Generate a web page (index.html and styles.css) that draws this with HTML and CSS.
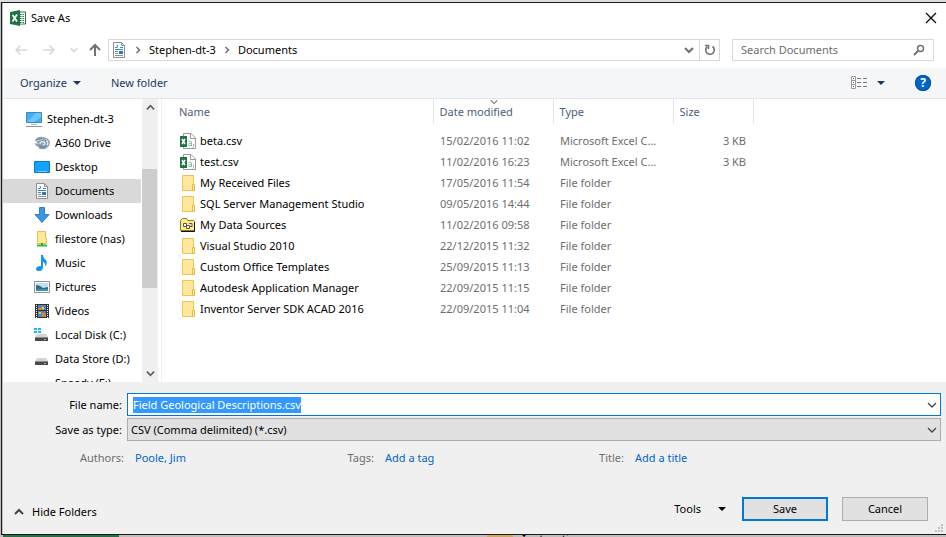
FILE: index.html
```html
<!DOCTYPE html>
<html lang="en">
<head>
    <meta charset="UTF-8">
    <meta name="viewport" content="width=device-width, initial-scale=1.0">
    <title>Save As</title>
    <link rel="stylesheet" href="styles.css">
</head>
<body>
    <svg class="sprite" aria-hidden="true">
        <symbol id="folder" viewBox="0 0 16 16">
            <path d="M2.500 .5h11v9h1v6h-12z" fill="#ffe79c" stroke="#edc64f"/>
            <path d="M12.500 15V9.500h2V15.500h-2z" fill="#fff0b8" stroke="#e6bb3c"/>
        </symbol>
        <symbol id="csv" viewBox="0 0 16 16">
            <path d="M3.500 .5h7.500l4.500 4.500v10.500h-12z" fill="#fff" stroke="#9b9b9b"/>
            <path d="M10.500 .5v5h5" fill="none" stroke="#9b9b9b"/>
            <path d="M8.500 8.500q3-1.500 3 1v3.500m0-2.500q-3-.5-3 1.200t3 .8M13.500 11v2.500q0 .8-1 1.200" fill="none" stroke="#7fbf9a"/>
            <path d="M0 3h7v11H0z" fill="#217346"/>
            <path d="M2 6l3 5M5 6l-3 5" stroke="#fff" stroke-width="1.500"/>
        </symbol>
        <symbol id="doc" viewBox="0 0 16 16">
            <path d="M2.500 .5h8l3 3v12h-11z" fill="#fff" stroke="#8f8f8f"/>
            <path d="M10.500 .5v3h3" fill="none" stroke="#8f8f8f"/>
            <path d="M4 5.500h2M5.500 3.500h1v2M9 5.500h3M4 7.500h8M4 9.500h3" fill="none" stroke="#2a8dd4"/>
            <path d="M8 9h4v3H8z" fill="#2a7ab8"/>
            <path d="M4 11.500h3M4 13.500h8" stroke="#8f8f8f"/>
        </symbol>
        <symbol id="chevron" viewBox="0 0 10 10">
            <path d="M1 3l4 4 4-4" fill="none" stroke="currentColor" stroke-width="1.300"/>
        </symbol>
        <symbol id="chevron-up" viewBox="0 0 10 10">
            <path d="M1 7l4-4 4 4" fill="none" stroke="currentColor" stroke-width="2"/>
        </symbol>
        <symbol id="chevron-bold" viewBox="0 0 10 10">
            <path d="M1 3l4 4 4-4" fill="none" stroke="currentColor" stroke-width="2"/>
        </symbol>
        <symbol id="chevron-right" viewBox="0 0 8 8">
            <path d="M2.500 1l3 3-3 3" fill="none" stroke="currentColor" stroke-width="1.500"/>
        </symbol>
        <symbol id="caret" viewBox="0 0 8 4">
            <path d="M0 0h8L4 4z" fill="currentColor"/>
        </symbol>
        <symbol id="drive" viewBox="0 0 16 16">
            <path d="M3 7h9l2 3H1z" fill="#d4d4d4"/>
            <path d="M1 10h13v4H1z" fill="#4a4a4a"/>
            <path d="M1 10.500h13" stroke="#8a8a8a"/>
            <path d="M10 12h2v1h-2z" fill="#4be04b"/>
        </symbol>
    </svg>

    <div class="backdrop-top"></div>

    <form class="dialog">
        <header class="titlebar">
            <svg class="app-icon" viewBox="0 0 16 16">
                <path d="M9 2h6.500v12H9z" fill="#fff" stroke="#217346"/>
                <path d="M10 4.500h4M10 6.500h4M10 8.500h4M10 10.500h4M10 12.500h4" stroke="#217346"/>
                <path d="M12 3v11" stroke="#fff"/>
                <path d="M0 2l10-2v16L0 14z" fill="#217346"/>
                <path d="M2.500 5l4.500 6.500M7 4.500l-4.500 7" stroke="#fff" stroke-width="1.700"/>
            </svg>
            <h1>Save As</h1>
            <button type="button" class="close" aria-label="Close">
                <svg width="12" height="12" viewBox="0 0 12 12"><path d="M1 1l10 10M11 1L1 11" stroke="#000" stroke-width="1.200"/></svg>
            </button>
        </header>

        <div class="navbar">
            <div class="history">
                <button type="button" aria-label="Back" disabled>
                    <svg width="14" height="14" viewBox="0 0 14 14"><path d="M13 7H2M6.500 2.500L2 7l4.500 4.500" fill="none" stroke="#d9d9d9" stroke-width="1.500"/></svg>
                </button>
                <button type="button" aria-label="Forward" disabled>
                    <svg width="14" height="14" viewBox="0 0 14 14"><path d="M1 7h11M7.500 2.500L12 7l-4.500 4.500" fill="none" stroke="#d9d9d9" stroke-width="1.500"/></svg>
                </button>
                <button type="button" class="recent" aria-label="Recent locations" disabled>
                    <svg width="8" height="8"><use href="#chevron-bold"/></svg>
                </button>
                <button type="button" aria-label="Up">
                    <svg width="14" height="14" viewBox="0 0 14 14"><path d="M7 13V2M2 7l5-5 5 5" fill="none" stroke="#717171" stroke-width="2"/></svg>
                </button>
            </div>
            <div class="address">
                <svg width="16" height="16"><use href="#doc"/></svg>
                <svg class="sep" width="8" height="8"><use href="#chevron-right"/></svg>
                <a href="#">Stephen-dt-3</a>
                <svg class="sep" width="8" height="8"><use href="#chevron-right"/></svg>
                <a href="#">Documents</a>
                <button type="button" class="previous" aria-label="Previous locations"><svg width="10" height="10"><use href="#chevron-bold"/></svg></button>
                <button type="button" class="refresh" aria-label="Refresh">
                    <svg width="12" height="12" viewBox="0 0 12 12"><path d="M8.500 2.500a4.300 4.300 0 1 1-5.500.4M1 1.500h3.500V5" fill="none" stroke="#717171" stroke-width="1.600"/></svg>
                </button>
            </div>
            <div class="search">
                <input type="search" placeholder="Search Documents" aria-label="Search Documents">
                <svg width="12" height="12" viewBox="0 0 12 12"><circle cx="7.500" cy="4.500" r="3" fill="none" stroke="#717171" stroke-width="1.500"/><path d="M5.500 6.500L1 11" stroke="#717171" stroke-width="2"/></svg>
            </div>
        </div>

        <div class="toolbar">
            <button type="button">Organize <svg width="8" height="4"><use href="#caret"/></svg></button>
            <button type="button">New folder</button>
            <button type="button" class="view" aria-label="Change your view">
                <svg width="17" height="14" viewBox="0 0 17 14">
                    <path d="M.5 .5h4v12h-4zM.5 4.500h4M.5 8.500h4" fill="#fff" stroke="#9a9a9a"/>
                    <path d="M2 2h1v1H2z" fill="#555"/><path d="M2 6h1v1H2z" fill="#2f7fff"/><path d="M2 10h1v1H2z" fill="#e02020"/>
                    <path d="M6 2.500h4M12 2.500h4M6 6.500h4M12 6.500h4M6 10.500h4M12 10.500h4" stroke="#7c7c7c"/>
                </svg>
                <svg width="8" height="4"><use href="#caret"/></svg>
            </button>
            <button type="button" class="help" aria-label="Help">?</button>
        </div>

        <main class="browser">
            <nav class="tree">
                <a href="#" class="root">
                    <svg viewBox="0 0 16 16"><path d="M.5 1.500h15v10H.5z" fill="#3bb0ff" stroke="#4c84ab"/><path d="M1 11l9-9h5v4l-7 5z" fill="#6cc7ff"/><path d="M5 13.500h6" stroke="#9cc3dc"/><path d="M0 15.500h16" stroke="#8593a3"/></svg>
                    Stephen-dt-3
                </a>
                <a href="#">
                    <svg viewBox="0 0 16 16"><path d="M1 5q3-4 8-3 6 1 7 5 0 5-5 7-4 1-7-1 2 0 1-1-4-1-4-4l3 1q-2-3-3-4z" fill="#8ba1b1"/><path d="M3 6q5-4 10 0 2 3-1 5M6 9q0-3 4-2 2 2-1 3" fill="none" stroke="#dbe5eb" stroke-width="1.500"/><path d="M3 5q6-3 9 1M5 11q5 3 8-1" fill="none" stroke="#5f7989"/></svg>
                    A360 Drive
                </a>
                <a href="#">
                    <svg viewBox="0 0 16 16"><path d="M.5 2.500h15v11H.5z" fill="#12a2ff" stroke="#1078b8"/><path d="M2 12.500h1M4 12.500h9" stroke="#7fd0ff"/></svg>
                    Desktop
                </a>
                <a href="#" class="selected"><svg><use href="#doc"/></svg>Documents</a>
                <a href="#">
                    <svg viewBox="0 0 16 16"><path d="M5.500 .5h5v7h4.500l-7 8-7-8h4.500z" fill="#3c96e6" stroke="#2b7fce"/></svg>
                    Downloads
                </a>
                <a href="#">
                    <svg viewBox="0 0 16 16"><path d="M3.500 .5h8v7h1v5h-9z" fill="#ffe79c" stroke="#e6c04c"/><path d="M8 12v2" stroke="#2b9c2b" stroke-width="2"/><path d="M3 14.500h10" stroke="#35b535" stroke-width="2"/></svg>
                    filestore (nas)
                </a>
                <a href="#">
                    <svg viewBox="0 0 16 16"><path d="M7 0h2q0 3 3 5 2 3-1 7 1-4-2-5v5q0 4-4 4-3 0-3-2 0-3 5-3z" fill="#1a94ea"/></svg>
                    Music
                </a>
                <a href="#">
                    <svg viewBox="0 0 16 16"><path d="M.5 2.500h15v11H.5z" fill="#fff" stroke="#929292"/><path d="M2 4h12v8H2z" fill="#b9e2f5"/><path d="M2 6q4 0 7 3l5-1v2H2z" fill="#356c70"/><path d="M2 10h12v2H2z" fill="#3e8ebc"/></svg>
                    Pictures
                </a>
                <a href="#">
                    <svg viewBox="0 0 16 16"><path d="M1 1h14v14H1z" fill="#333"/><path d="M4 2h8v5H4zM4 8h8v6H4z" fill="#4b83ce"/><path d="M4 5h3l1-2 2 1v3H4zM7 11l3-2 2 3v2H8z" fill="#c98b35"/><path d="M8 4h2v2H8zM5 9h2v2H5z" fill="#e4cf3c"/><path d="M2.500 2v13M13.500 2v13" stroke="#fff" stroke-dasharray="1 1"/></svg>
                    Videos
                </a>
                <a href="#">
                    <svg viewBox="0 0 16 16"><use href="#drive" width="16" height="16"/><path d="M0 1h3v2H0zM4 1h3v2H4zM0 4h3v2H0zM4 4h3v2H4z" fill="#1bb4ef"/></svg>
                    Local Disk (C:)
                </a>
                <a href="#"><svg><use href="#drive"/></svg>Data Store (D:)</a>
                <a href="#"><svg><use href="#drive"/></svg>Speedy (E:)</a>
            </nav>
            <div class="scrollbar">
                <button type="button" aria-label="Scroll up"><svg width="9" height="9"><use href="#chevron-up"/></svg></button>
                <div class="track"><div class="thumb"></div></div>
                <button type="button" aria-label="Scroll down"><svg width="9" height="9"><use href="#chevron-bold"/></svg></button>
            </div>
            <div class="files">
                <table>
                    <thead>
                        <tr>
                            <th class="name">Name</th>
                            <th class="date">Date modified<svg class="sort" width="8" height="8"><use href="#chevron"/></svg></th>
                            <th class="type">Type</th>
                            <th class="size">Size</th>
                            <th class="rest"></th>
                        </tr>
                    </thead>
                    <tbody>
                        <tr><td><svg><use href="#csv"/></svg>beta.csv</td><td>15/02/2016 11:02</td><td>Microsoft Excel C...</td><td>3 KB</td></tr>
                        <tr><td><svg><use href="#csv"/></svg>test.csv</td><td>11/02/2016 16:23</td><td>Microsoft Excel C...</td><td>3 KB</td></tr>
                        <tr><td><svg><use href="#folder"/></svg>My Received Files</td><td>17/05/2016 11:54</td><td>File folder</td><td></td></tr>
                        <tr><td><svg><use href="#folder"/></svg>SQL Server Management Studio</td><td>09/05/2016 14:44</td><td>File folder</td><td></td></tr>
                        <tr>
                            <td><svg viewBox="0 0 16 16"><path d="M.5 13.500v-10l2-2h4l1.500 2h5.500l1 1v9z" fill="#ffe98a" stroke="#8a7a1c"/><path d="M1 14.500h13.500V5" fill="none" stroke="#111"/><path d="M3.500 6.500h3v3h-3zM6.500 8.500h3v3h-3z" fill="#fff" stroke="#555"/><path d="M9 6.500h3v3h-2" fill="none" stroke="#555"/></svg>My Data Sources</td>
                            <td>11/02/2016 09:58</td><td>File folder</td><td></td>
                        </tr>
                        <tr><td><svg><use href="#folder"/></svg>Visual Studio 2010</td><td>22/12/2015 11:32</td><td>File folder</td><td></td></tr>
                        <tr><td><svg><use href="#folder"/></svg>Custom Office Templates</td><td>25/09/2015 11:13</td><td>File folder</td><td></td></tr>
                        <tr><td><svg><use href="#folder"/></svg>Autodesk Application Manager</td><td>22/09/2015 11:15</td><td>File folder</td><td></td></tr>
                        <tr><td><svg><use href="#folder"/></svg>Inventor Server SDK ACAD 2016</td><td>22/09/2015 11:04</td><td>File folder</td><td></td></tr>
                    </tbody>
                </table>
            </div>
        </main>

        <footer class="options">
            <div class="field">
                <label for="filename">File name:</label>
                <div class="combo active">
                    <input type="text" id="filename" value="Field Geological Descriptions.csv">
                    <button type="button" aria-label="Show file names"><svg width="10" height="10"><use href="#chevron"/></svg></button>
                </div>
            </div>
            <div class="field">
                <label for="filetype">Save as type:</label>
                <div class="combo">
                    <select id="filetype">
                        <option>CSV (Comma delimited) (*.csv)</option>
                    </select>
                    <svg class="arrow" width="10" height="10"><use href="#chevron"/></svg>
                </div>
            </div>
            <div class="meta">
                <span>Authors:</span><a href="#">Poole, Jim</a>
                <span>Tags:</span><a href="#">Add a tag</a>
                <span>Title:</span><a href="#">Add a title</a>
            </div>
            <div class="actions">
                <button type="button" class="hide"><svg width="10" height="10"><use href="#chevron-up"/></svg>Hide Folders</button>
                <button type="button" class="tools">Tools <svg width="8" height="4"><use href="#caret"/></svg></button>
                <button type="submit" class="btn primary">Save</button>
                <button type="button" class="btn">Cancel</button>
            </div>
            <svg class="grip" width="8" height="8" viewBox="0 0 8 8"><path d="M6 0h2v2H6zM3 3h2v2H3zM6 3h2v2H6zM0 6h2v2H0zM3 6h2v2H3zM6 6h2v2H6z" fill="#bfbfbf"/></svg>
        </footer>
    </form>

    <div class="backdrop-bottom">
        <div class="sheet-tab"></div>
        <div class="folder-edge"></div>
        <span>Instructions:</span>
    </div>

    <script>
        const filename = document.getElementById('filename');
        filename.focus();
        filename.select();
    </script>
</body>
</html>
```

FILE: styles.css
```css
* {
    box-sizing: border-box;
}

body {
    margin: 0;
    height: 100vh;
    display: flex;
    flex-direction: column;
    overflow: hidden;
    background-color: #c0bebe;
    font-family: "Noto Sans", "Open Sans", sans-serif;
    font-size: 11px;
    line-height: 16px;
    color: #000;
}

button,
input,
select {
    font: inherit;
    color: inherit;
    margin: 0;
    padding: 0;
    border: none;
    border-radius: 0;
    background: none;
    outline: none;
}

a {
    color: inherit;
    text-decoration: none;
}

svg {
    flex: none;
}

.sprite {
    position: absolute;
    width: 0;
    height: 0;
}

.backdrop-top {
    height: 2px;
    flex: none;
    background-color: #dedede;
}

.backdrop-bottom {
    height: 2px;
    flex: none;
    display: flex;
    overflow: hidden;
    padding-left: 3px;
}

.sheet-tab {
    width: 116px;
    background-color: #217346;
}

.folder-edge {
    width: 26px;
    margin: 0 9px 0 368px;
    background-color: #d0aa5c;
}

.backdrop-bottom span {
    font-size: 12px;
    line-height: 10px;
}

.dialog {
    flex: 1;
    min-height: 0;
    display: flex;
    flex-direction: column;
    margin-left: 1px;
    border: solid #1a1a1a;
    border-width: 1px 0 1px 1px;
    box-shadow: inset 1px 0 #c0bebe;
    padding-left: 1px;
}

/* title bar */
.titlebar {
    display: flex;
    align-items: center;
    gap: 5px;
    height: 30px;
    padding: 0 8px 0 7px;
    background-color: #fff;
}

.app-icon {
    width: 16px;
    height: 16px;
}

.titlebar h1 {
    flex: 1;
    margin: 0;
    font-size: 11px;
    font-weight: normal;
}

.close {
    display: flex;
    padding: 1px;
}

/* address bar */
.navbar {
    display: flex;
    align-items: center;
    gap: 12px;
    height: 35px;
    padding: 0 12px 1px 11px;
    background-color: #fff;
}

.history {
    display: flex;
    align-items: center;
    gap: 14px;
    margin-right: -6px;
}

.history button {
    display: flex;
}

.history .recent {
    color: #d9d9d9;
    margin-right: -4px;
}

.address {
    flex: 1;
    display: flex;
    align-items: center;
    height: 22px;
    padding-left: 2px;
    border: 1px solid #d9d9d9;
}

.address .sep {
    color: #717171;
    margin: 0 7px;
}

.address button {
    display: flex;
    align-items: center;
    justify-content: center;
    width: 20px;
    height: 20px;
    color: #717171;
}

.address .previous {
    margin-left: auto;
}

.address .refresh {
    border-left: 1px solid #d9d9d9;
}

.search {
    display: flex;
    align-items: center;
    width: 202px;
    height: 22px;
    padding: 0 8px;
    border: 1px solid #d9d9d9;
}

.search input {
    flex: 1;
    min-width: 0;
    appearance: none;
}

.search input::placeholder {
    color: #6d6d6d;
    opacity: 1;
}

/* toolbar */
.toolbar {
    display: flex;
    align-items: center;
    height: 31px;
    gap: 30px;
    padding: 0 15px 0 17px;
    background-color: #f5f6f7;
    border-bottom: 1px solid #e3e5e8;
    color: #1e395b;
}

.toolbar button {
    display: flex;
    align-items: center;
    gap: 6px;
}

.toolbar .view {
    gap: 9px;
    margin-left: auto;
}

.toolbar .help {
    justify-content: center;
    width: 16px;
    height: 16px;
    border-radius: 50%;
    background-color: #0066cc;
    box-shadow: inset 0 0 0 1px #004f9e;
    color: #fff;
    font-size: 12px;
    font-weight: bold;
}

/* folder tree and file list */
.browser {
    flex: 1;
    min-height: 0;
    display: flex;
    background-color: #fff;
}

.tree {
    width: 138px;
    padding-top: 8px;
    overflow: hidden;
}

.tree a {
    display: flex;
    align-items: center;
    gap: 5px;
    height: 24px;
    padding-left: 31px;
    white-space: nowrap;
}

.tree .root {
    padding-left: 23px;
}

.tree svg,
.files td svg {
    width: 16px;
    height: 16px;
}

.tree .selected {
    background-color: #d9d9d9;
}

.scrollbar {
    display: flex;
    flex-direction: column;
    width: 16px;
    margin: 0 3px 0 1px;
    background-color: #f0f0f0;
}

.scrollbar button {
    display: flex;
    align-items: center;
    justify-content: center;
    height: 17px;
    color: #606060;
}

.scrollbar .track {
    flex: 1;
    padding-top: 53px;
}

.scrollbar .thumb {
    width: 15px;
    height: 119px;
    background-color: #cdcdcd;
}

.files {
    flex: 1;
    border-left: 1px solid #f0f0f0;
}

.files table {
    width: 100%;
    table-layout: fixed;
    border-collapse: collapse;
}

.files th {
    position: relative;
    height: 25px;
    padding: 0 6px;
    border-left: 1px solid #e5e5e5;
    text-align: left;
    font-weight: normal;
    color: #4c607a;
}

.files .name {
    width: 271px;
    padding-left: 17px;
    border-left: none;
}

.files .date,
.files .type {
    width: 120px;
}

.files .size {
    width: 80px;
}

.files .sort {
    position: absolute;
    top: -1px;
    left: 56px;
    color: #717171;
}

.files tbody::before {
    content: "";
    display: block;
    height: 6px;
}

.files td {
    height: 21px;
    padding: 0 7px;
    white-space: nowrap;
    color: #6d6d6d;
}

.files td:first-child {
    padding-left: 18px;
    color: #000;
}

.files td:nth-child(4) {
    text-align: right;
}

.files td svg {
    margin-right: 4px;
    vertical-align: top;
}

/* file name, type and buttons */
.options {
    position: relative;
    padding: 11px 5px 13px 0;
    background-color: #f0f0f0;
}

.field {
    display: flex;
    align-items: center;
    gap: 5px;
    margin-bottom: 2px;
}

.field label {
    width: 119px;
    text-align: right;
}

.combo {
    position: relative;
    flex: 1;
    display: flex;
    align-items: center;
    height: 23px;
    border: 1px solid #adadad;
    background-color: #e1e1e1;
    color: #000;
}

.combo.active {
    border-color: #0078d7;
    background-color: #fff;
}

.combo input {
    flex: 1;
    padding-left: 5px;
}

.combo input::selection {
    background-color: #3399ff;
    color: #fff;
}

.combo button {
    display: flex;
    padding: 3px;
    color: #444;
}

.combo select {
    flex: 1;
    height: 21px;
    padding-left: 3px;
    appearance: none;
}

.combo .arrow {
    position: absolute;
    right: 3px;
    color: #444;
    pointer-events: none;
}

.meta {
    display: grid;
    grid-template-columns: 121px 107px 121px 107px 121px 1fr;
    column-gap: 11px;
    margin-top: 9px;
}

.meta span {
    color: #6d6d6d;
    text-align: right;
}

.meta a {
    color: #0066cc;
}

.actions {
    display: flex;
    align-items: center;
    margin-top: 31px;
    padding: 0 13px 0 11px;
}

.actions .hide {
    display: flex;
    align-items: center;
    gap: 8px;
    margin-right: auto;
    padding-top: 6px;
}

.actions .hide svg {
    color: #444;
}

.actions .tools {
    display: flex;
    align-items: center;
    gap: 17px;
    margin-right: 16px;
}

.btn {
    width: 86px;
    height: 24px;
    border: 1px solid #adadad;
    background-color: #e1e1e1;
}

.btn.primary {
    margin-right: 14px;
    border: 2px solid #0078d7;
}

.grip {
    position: absolute;
    right: 3px;
    bottom: 2px;
}
```
